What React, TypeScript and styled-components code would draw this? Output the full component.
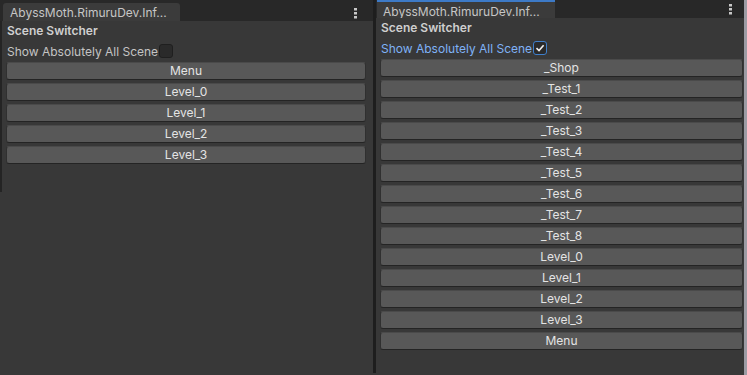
import React from "react";
import styled, { createGlobalStyle } from "styled-components";

const GlobalStyle = createGlobalStyle`
  html, body {
    margin: 0;
    padding: 0;
    background: #383838;
  }
  body {
    font-family: Inter, "Noto Sans", sans-serif;
    font-size: 12px;
  }
`;

const Window = styled.div`
  display: flex;
  width: 747px;
  height: 375px;
  background: #383838;
  overflow: hidden;
`;

const Pane = styled.section<{ $width?: number; $edge?: boolean }>`
  display: flex;
  flex-direction: column;
  width: ${(p) => (p.$width ? `${p.$width}px` : "auto")};
  flex: ${(p) => (p.$width ? "none" : "1")};
  box-sizing: border-box;
  border-right: ${(p) => (p.$edge ? "3px solid #9c9ca4" : "none")};
`;

const Divider = styled.div`
  width: 3px;
  height: 373px;
  background: #1e1e1e;
  flex: none;
`;

const TabStrip = styled.div<{ $height: number; $inset: number }>`
  display: flex;
  align-items: flex-end;
  justify-content: space-between;
  height: ${(p) => p.$height}px;
  padding-left: ${(p) => p.$inset}px;
  background: #282828;
  flex: none;
  box-sizing: border-box;
`;

const Tab = styled.div<{ $focused?: boolean }>`
  display: flex;
  align-items: center;
  width: ${(p) => (p.$focused ? 178 : 177)}px;
  height: 18px;
  box-sizing: border-box;
  padding: ${(p) => (p.$focused ? "2px 0 0 6px" : "0 0 0 7px")};
  background: #3b3b3b;
  border-top: ${(p) => (p.$focused ? "2px solid #3d7ac7" : "none")};
  border-radius: ${(p) => (p.$focused ? "0" : "3px 3px 0 0")};
  color: #c6c6c6;
  font-size: 12px;
  white-space: nowrap;
  overflow: hidden;
`;

const Kebab = styled.svg<{ $right: number; $top: number }>`
  align-self: flex-start;
  margin-top: ${(p) => p.$top}px;
  margin-right: ${(p) => p.$right}px;
`;

const Content = styled.div<{ $height?: number; $edge?: boolean; $pr: number }>`
  display: flex;
  flex-direction: column;
  box-sizing: border-box;
  height: ${(p) => (p.$height ? `${p.$height}px` : "auto")};
  padding: 0 ${(p) => p.$pr}px 0 ${(p) => (p.$edge ? 4 : 4)}px;
  border-left: ${(p) => (p.$edge ? "2px solid #242424" : "none")};
`;

const Heading = styled.div`
  height: 20px;
  line-height: 20px;
  font-weight: 600;
  color: #cfcfcf;
  padding-left: 1px;
`;

const ToggleRow = styled.label<{ $focused?: boolean }>`
  display: flex;
  align-items: center;
  height: 20px;
  padding-left: 1px;
  margin-bottom: 1px;
  color: ${(p) => (p.$focused ? "#7fb2f6" : "#c4c4c4")};
`;

const Box = styled.span<{ $checked?: boolean }>`
  display: inline-flex;
  align-items: center;
  justify-content: center;
  width: 14px;
  height: 14px;
  margin-left: 1px;
  box-sizing: border-box;
  border-radius: 3px;
  background: #2a2a2a;
  border: 1px solid ${(p) => (p.$checked ? "#3f7fcb" : "#1f1f1f")};
`;

const SceneButton = styled.button`
  display: block;
  width: 100%;
  height: 18px;
  margin: 0 0 3px 0;
  padding: 0;
  box-sizing: border-box;
  background: #585858;
  border: 1px solid #303030;
  border-top-color: #4a4a4a;
  border-bottom-color: #242424;
  border-radius: 3px;
  color: #e4e4e4;
  font-family: Inter, "Noto Sans", sans-serif;
  font-size: 12px;
  line-height: 16px;
  text-align: center;
`;

function Dots() {
  return (
    <>
      <rect x="0" y="0" width="3" height="2.5" fill="#c8c8c8" />
      <rect x="0" y="4" width="3" height="2.5" fill="#c8c8c8" />
      <rect x="0" y="8" width="3" height="2.5" fill="#c8c8c8" />
    </>
  );
}

function Check() {
  return (
    <svg width="10" height="10" viewBox="0 0 10 10">
      <path d="M1.5 5.2 L4 7.6 L8.6 2.2" stroke="#f0f0f0" strokeWidth="1.6" fill="none" />
    </svg>
  );
}

const leftScenes = ["Menu", "Level_0", "Level_1", "Level_2", "Level_3"];
const rightScenes = [
  "_Shop",
  "_Test_1",
  "_Test_2",
  "_Test_3",
  "_Test_4",
  "_Test_5",
  "_Test_6",
  "_Test_7",
  "_Test_8",
  "Level_0",
  "Level_1",
  "Level_2",
  "Level_3",
  "Menu",
];

export default function App() {
  return (
    <>
      <GlobalStyle />
      <Window>
        <Pane $width={373}>
          <TabStrip $height={21} $inset={3}>
            <Tab>AbyssMoth.RimuruDev.Inf...</Tab>
            <Kebab $right={16} $top={8} width="3" height="11" viewBox="0 0 3 11">
              <Dots />
            </Kebab>
          </TabStrip>
          <Content $height={171} $edge $pr={7}>
            <Heading>Scene Switcher</Heading>
            <ToggleRow>
              Show Absolutely All Scene
              <Box />
            </ToggleRow>
            {leftScenes.map((s) => (
              <SceneButton key={s}>{s}</SceneButton>
            ))}
          </Content>
        </Pane>
        <Divider />
        <Pane $edge>
          <TabStrip $height={18} $inset={1}>
            <Tab $focused>AbyssMoth.RimuruDev.Inf...</Tab>
            <Kebab $right={12} $top={4} width="3" height="11" viewBox="0 0 3 11">
              <Dots />
            </Kebab>
          </TabStrip>
          <Content $pr={1}>
            <Heading>Scene Switcher</Heading>
            <ToggleRow $focused>
              Show Absolutely All Scene
              <Box $checked>
                <Check />
              </Box>
            </ToggleRow>
            {rightScenes.map((s) => (
              <SceneButton key={s}>{s}</SceneButton>
            ))}
          </Content>
        </Pane>
      </Window>
    </>
  );
}
